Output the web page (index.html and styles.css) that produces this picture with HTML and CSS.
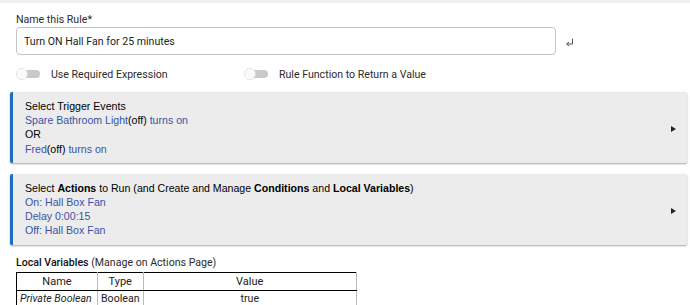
FILE: index.html
```html
<!DOCTYPE html>
<html lang="en">
<head>
  <meta charset="UTF-8">
  <meta name="viewport" content="width=device-width, initial-scale=1.0">
  <title>Rule Machine</title>
  <link rel="stylesheet" href="styles.css">
</head>
<body>

  <div class="topbar"></div>

  <div class="form-top">
    <div class="field-label">Name this Rule*</div>
    <div class="name-row">
      <input class="name-input" type="text" value="Turn ON Hall Fan for 25 minutes">
      <svg class="enter-icon" width="9" height="9" viewBox="0 0 9 9">
        <path d="M7.5 0.5 V6 H2" fill="none" stroke="#555" stroke-width="1"/>
        <path d="M4 4 L1.5 6 L4 8" fill="none" stroke="#555" stroke-width="1"/>
      </svg>
    </div>

    <div class="switch-row">
      <label class="switch-item">
        <svg class="switch" width="26" height="14" viewBox="0 0 26 14">
          <rect x="6" y="3" width="19" height="8" rx="4" fill="#c9c9c9"/>
          <circle cx="7" cy="7" r="5.6" fill="#fafafa" stroke="#d6d6d6" stroke-width="0.6"/>
        </svg>
        <span>Use Required Expression</span>
      </label>
      <label class="switch-item">
        <svg class="switch" width="26" height="14" viewBox="0 0 26 14">
          <rect x="6" y="3" width="19" height="8" rx="4" fill="#c9c9c9"/>
          <circle cx="7" cy="7" r="5.6" fill="#fafafa" stroke="#d6d6d6" stroke-width="0.6"/>
        </svg>
        <span>Rule Function to Return a Value</span>
      </label>
    </div>
  </div>

  <div class="panel">
    <div class="panel-body">
      <div>Select Trigger Events</div>
      <div class="link">Spare Bathroom Light<span class="state">(off)</span> turns on</div>
      <div>OR</div>
      <div class="link">Fred<span class="state">(off)</span> turns on</div>
    </div>
    <span class="arrow"></span>
  </div>

  <div class="panel">
    <div class="panel-body">
      <div>Select <b>Actions</b> to Run (and Create and Manage <b>Conditions</b> and <b>Local Variables</b>)</div>
      <div class="link">On: Hall Box Fan</div>
      <div class="link">Delay 0:00:15</div>
      <div class="link">Off: Hall Box Fan</div>
    </div>
    <span class="arrow"></span>
  </div>

  <div class="locals">
    <div class="locals-title"><span class="strong">Local Variables</span> (Manage on Actions Page)</div>
    <table class="vars">
      <thead>
        <tr>
          <th class="col-name">Name</th>
          <th class="col-type">Type</th>
          <th>Value</th>
        </tr>
      </thead>
      <tbody>
        <tr>
          <td><i>Private Boolean</i></td>
          <td>Boolean</td>
          <td class="center">true</td>
        </tr>
      </tbody>
    </table>
  </div>

</body>
</html>
```

FILE: styles.css
```css
body {
  margin: 0;
  font-family: Roboto, 'Liberation Sans', sans-serif;
  font-size: 10.6px;
  color: #333;
  background-color: #fff;
}

.topbar {
  height: 3px;
  background-color: #efefef;
}

.form-top {
  padding: 10px 0 0 16px;
}

.field-label {
  line-height: 14px;
  color: #2b2b2b;
}

.name-row {
  display: flex;
  align-items: center;
  gap: 9px;
}

.name-input {
  width: 540px;
  height: 28px;
  box-sizing: border-box;
  margin: 0;
  padding: 0 7px;
  border: 1px solid #c4c4c4;
  border-radius: 4px;
  font-family: inherit;
  font-size: 10.6px;
  color: #222;
  background-color: #fff;
}

.enter-icon {
  margin-top: 2px;
}

.switch-row {
  display: grid;
  grid-template-columns: 228px auto;
  align-items: center;
  height: 20px;
  margin: 9px 0 8px;
}

.switch-item {
  display: flex;
  align-items: center;
  gap: 10px;
  margin-left: -1px;
  color: #2b2b2b;
}

.panel {
  display: flex;
  align-items: center;
  margin: 0 3px 11px 10px;
  padding: 7px 11px 7px 12px;
  background-color: #ececec;
  border-left: 3px solid #1f6fbf;
  border-radius: 2px;
  box-shadow: 0 1px 2px rgba(0, 0, 0, 0.35);
  font-family: 'Liberation Sans', Arial, sans-serif;
  line-height: 14.2px;
  color: #000;
}

.panel-body {
  flex: 1;
}

.link {
  color: #3a52a6;
}

.state {
  color: #000;
}

.arrow {
  width: 0;
  height: 0;
  border-left: 5px solid #222;
  border-top: 3.5px solid transparent;
  border-bottom: 3.5px solid transparent;
  margin-top: 3px;
}

.locals {
  padding-left: 16px;
}

.locals-title {
  line-height: 14px;
  color: #2b2b2b;
}

.strong {
  font-weight: 500;
  color: #111;
}

.vars {
  width: 341px;
  margin-top: 2px;
  border-collapse: collapse;
  border: 1px solid #000;
  color: #222;
}

.vars th {
  height: 17px;
  padding: 0 3px;
  font-size: 11px;
  font-weight: normal;
  border-bottom: 1px solid #000;
  border-right: 1px solid #bbb;
}

.vars td {
  height: 16px;
  padding: 0 3px;
  border-right: 1px solid #bbb;
  white-space: nowrap;
}

.col-name {
  width: 74px;
}

.col-type {
  width: 38px;
}

.center {
  text-align: center;
}
```
